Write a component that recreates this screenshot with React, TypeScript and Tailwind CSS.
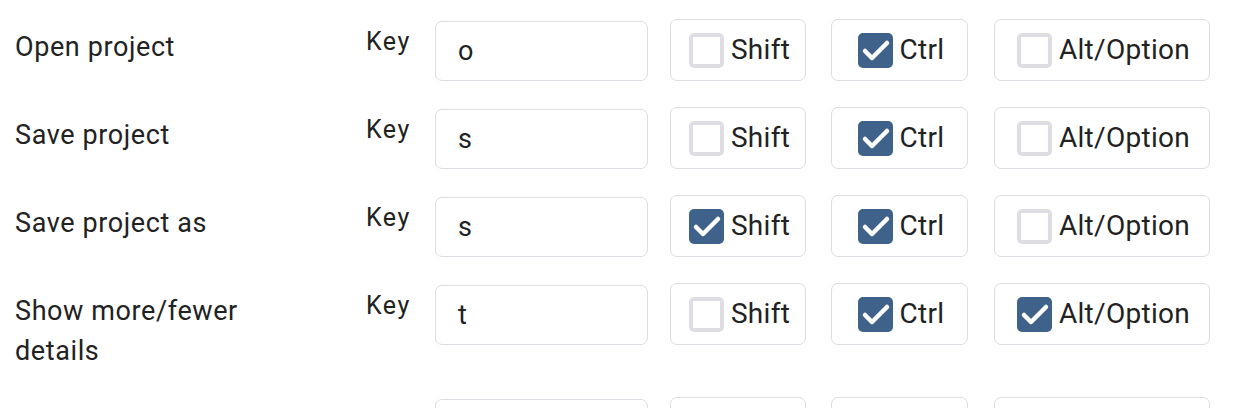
import React from "react";

type Shortcut = {
  label: string;
  key: string;
  shift: boolean;
  ctrl: boolean;
  alt: boolean;
};

const shortcuts: Shortcut[] = [
  { label: "Open project", key: "o", shift: false, ctrl: true, alt: false },
  { label: "Save project", key: "s", shift: false, ctrl: true, alt: false },
  { label: "Save project as", key: "s", shift: true, ctrl: true, alt: false },
  { label: "Show more/fewer details", key: "t", shift: false, ctrl: true, alt: true },
];

const Check = ({ checked }: { checked: boolean }) =>
  checked ? (
    <span className="flex h-[35px] w-[35px] items-center justify-center rounded-[5px] bg-[#3e6289]">
      <svg width="35" height="35" viewBox="0 0 35 35">
        <polyline
          points="7,18 14,25 29,10"
          fill="none"
          stroke="#ffffff"
          strokeWidth="4.5"
          strokeLinecap="round"
          strokeLinejoin="round"
        />
      </svg>
    </span>
  ) : (
    <span className="block h-[35px] w-[35px] rounded-[5px] border-[4px] border-[#dddde3] bg-white" />
  );

const Modifier = ({
  label,
  checked,
  className,
}: {
  label: string;
  checked: boolean;
  className: string;
}) => (
  <label
    className={`flex h-[62px] items-center justify-center gap-[7px] rounded-[7px] border-[1.5px] border-[#dcdce2] bg-white pl-[3px] ${className}`}
  >
    <Check checked={checked} />
    <span className="text-[28px] leading-[40px] tracking-[0.3px]">{label}</span>
  </label>
);

const App = () => {
  return (
    <div className="h-[408px] overflow-hidden bg-white pl-[15px] pt-[19px] font-['Roboto',sans-serif] text-[#222222]">
      {shortcuts.map((s) => (
        <div key={s.label} className="mb-[26px] flex items-start">
          <div className="w-[351px] pr-[80px] pt-[8px] text-[27px] leading-[40px] tracking-[0.6px]">
            {s.label}
          </div>
          <div className="w-[69px] pt-[3px] text-[25px] leading-[40px] tracking-[1.5px]">Key</div>
          <div className="mt-[2px] flex h-[60px] w-[213px] items-center rounded-[7px] border-[1.5px] border-[#dcdce2] pl-[22px] text-[27px]">
            {s.key}
          </div>
          <Modifier label="Shift" checked={s.shift} className="ml-[22px] w-[136px]" />
          <Modifier label="Ctrl" checked={s.ctrl} className="ml-[25px] w-[137px]" />
          <Modifier label="Alt/Option" checked={s.alt} className="ml-[26px] w-[216px]" />
        </div>
      ))}

      {/* next row, only its top edge is in view */}
      <div className="flex items-start">
        <div className="w-[420px]" />
        <div className="mt-[2px] h-[60px] w-[213px] rounded-[7px] border-[1.5px] border-[#dcdce2]" />
        <div className="ml-[22px] h-[62px] w-[136px] rounded-[7px] border-[1.5px] border-[#dcdce2]" />
        <div className="ml-[25px] h-[62px] w-[137px] rounded-[7px] border-[1.5px] border-[#dcdce2]" />
        <div className="ml-[26px] h-[62px] w-[216px] rounded-[7px] border-[1.5px] border-[#dcdce2]" />
      </div>
    </div>
  );
};

export default App;
